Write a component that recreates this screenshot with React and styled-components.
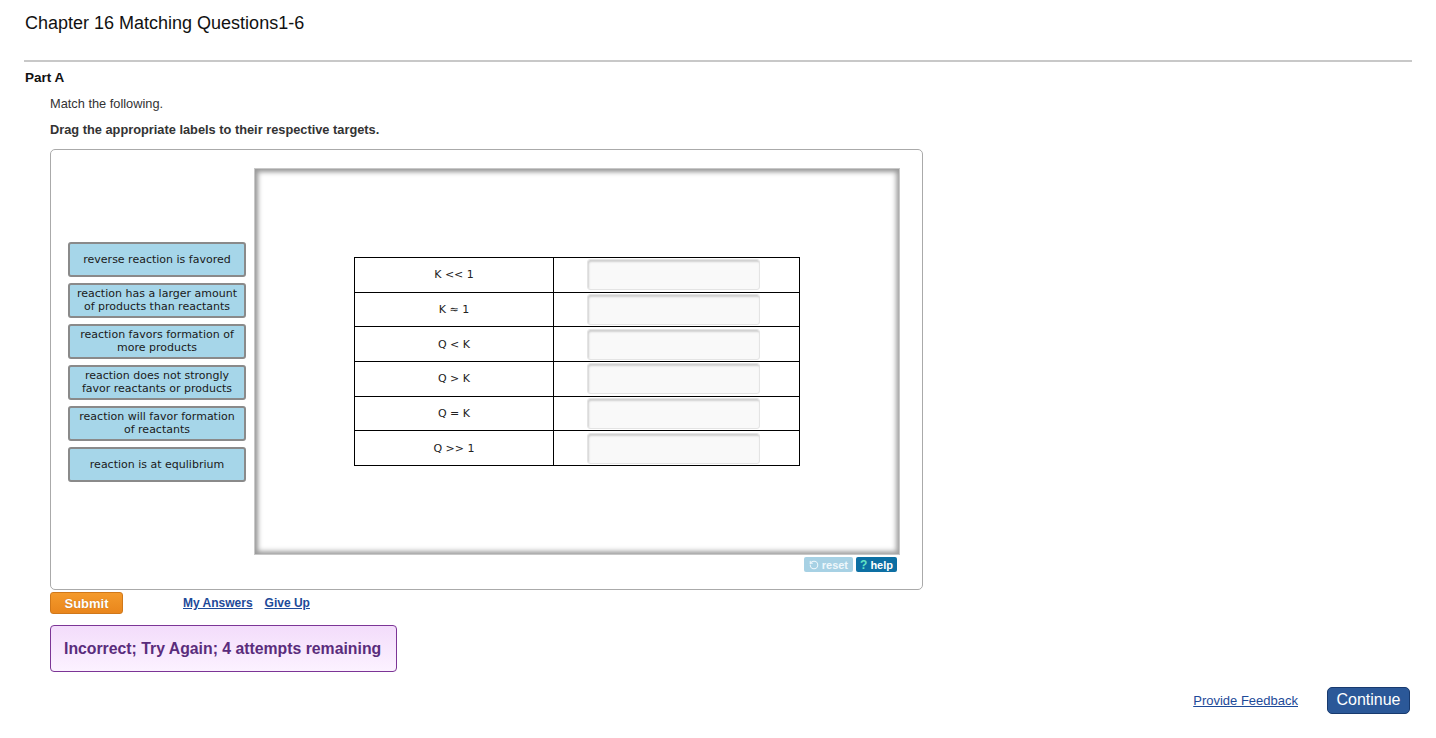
import React from "react";
import styled, { createGlobalStyle } from "styled-components";
import { RotateCcw } from "lucide-react";

const GlobalStyle = createGlobalStyle`
  html, body {
    margin: 0;
    padding: 0;
    background: #fff;
  }
  body {
    font-family: "Liberation Sans", Arial, sans-serif;
    color: #222;
  }
`;

const labels = [
  "reverse reaction is favored",
  "reaction has a larger amount of products than reactants",
  "reaction favors formation of more products",
  "reaction does not strongly favor reactants or products",
  "reaction will favor formation of reactants",
  "reaction is at equlibrium",
];

const targets = ["K << 1", "K \u2248 1", "Q < K", "Q > K", "Q = K", "Q >> 1"];

const Page = styled.div`
  padding: 0 24px 0 24px;
  width: 1388px;
`;

const Title = styled.h1`
  margin: 0;
  padding: 12px 0 0 1px;
  font-size: 18px;
  line-height: 22px;
  font-weight: normal;
  color: #111;
`;

const Rule = styled.hr`
  margin: 26px 0 0 0;
  border: 0;
  height: 2px;
  background: #c8c8c8;
`;

const PartTitle = styled.h2`
  margin: 8px 0 0 1px;
  font-size: 13.5px;
  line-height: 16px;
  font-weight: bold;
  color: #111;
`;

const Content = styled.div`
  padding-left: 26px;
`;

const Prompt = styled.p`
  margin: ${({ $top }) => $top}px 0 0 0;
  font-size: 12.8px;
  line-height: 16px;
  color: #333;
  font-weight: ${({ $bold }) => ($bold ? "bold" : "normal")};
`;

const Board = styled.div`
  margin-top: 11px;
  border: 1px solid #aaa;
  border-radius: 5px;
  display: flex;
  align-items: flex-start;
  padding: 18px 0 0 17px;
  box-sizing: content-box;
  width: 854px;
  height: 421px;
`;

const LabelColumn = styled.div`
  width: 178px;
  height: 387px;
  display: flex;
  flex-direction: column;
  justify-content: center;
  gap: 6px;
  margin-right: 8px;
`;

const Label = styled.div`
  box-sizing: border-box;
  width: 178px;
  height: 35px;
  background: #a6d6e9;
  border: 2px solid #8a8a8a;
  border-radius: 3px;
  display: flex;
  align-items: center;
  justify-content: center;
  text-align: center;
  padding: 0 4px;
  font-family: "DejaVu Sans", Verdana, sans-serif;
  font-size: 11px;
  line-height: 13px;
  color: #1a1a1a;
`;

const CanvasColumn = styled.div`
  display: flex;
  flex-direction: column;
`;

const Canvas = styled.div`
  box-sizing: border-box;
  width: 646px;
  height: 387px;
  background: #fff;
  border: 1px solid #c8c8c8;
  box-shadow: inset 2px 2px 5px 1px #999, inset -2px -2px 5px 1px #aaa;
  display: flex;
  align-items: center;
  justify-content: center;
`;

const MatchTable = styled.table`
  border-collapse: collapse;
  width: 446px;
  font-family: "DejaVu Sans", Verdana, sans-serif;
  font-size: 11px;
  color: #222;
`;

const Row = styled.tr`
  height: 34.7px;
`;

const KeyCell = styled.td`
  border: 1px solid #000;
  width: 198px;
  text-align: center;
  padding: 0;
`;

const DropCell = styled.td`
  border: 1px solid #000;
  padding: 0 0 0 33px;
`;

const DropSlot = styled.div`
  box-sizing: border-box;
  width: 173px;
  height: 31px;
  background: #f9f9f9;
  border: 1px solid #e4e4e4;
  border-radius: 3px;
  box-shadow: inset 1px 2px 2px #d0d0d0;
`;

const Toolbar = styled.div`
  display: flex;
  justify-content: flex-end;
  gap: 3px;
  margin-top: 2px;
  padding-right: 3px;
`;

const ToolButton = styled.button`
  display: flex;
  align-items: center;
  gap: 3px;
  height: 15px;
  padding: 0 ${({ $active }) => ($active ? 4 : 5)}px;
  border: 0;
  border-radius: 2px;
  background: ${({ $active }) => ($active ? "#0d6fa3" : "#a7d1e4")};
  color: ${({ $active }) => ($active ? "#fff" : "#eef7fb")};
  font-family: "Liberation Sans", Arial, sans-serif;
  font-size: 11px;
  font-weight: bold;
  cursor: pointer;
`;

const HelpMark = styled.span`
  color: #62e2c4;
  font-size: 12px;
`;

const Actions = styled.div`
  display: flex;
  align-items: center;
  margin-top: 2px;
`;

const SubmitButton = styled.button`
  box-sizing: border-box;
  width: 73px;
  height: 22px;
  border: 1px solid #d0781a;
  border-radius: 3px;
  background: linear-gradient(#f49a2c, #e9861c);
  color: #fff;
  font-family: "Liberation Sans", Arial, sans-serif;
  font-size: 13px;
  font-weight: bold;
  text-shadow: 0 0 1px #b8640e;
  padding: 0;
`;

const LinkGroup = styled.div`
  display: flex;
  gap: 12px;
  margin-left: 60px;
`;

const ActionLink = styled.a`
  color: #1d4a99;
  font-size: 12px;
  font-weight: ${({ $bold }) => ($bold ? "bold" : "normal")};
  text-decoration: underline;
`;

const Feedback = styled.div`
  box-sizing: border-box;
  margin-top: 11px;
  width: 347px;
  height: 47px;
  border: 1px solid #7c3596;
  border-radius: 4px;
  background: linear-gradient(#f3dcfb, #fcf2ff);
  display: flex;
  align-items: center;
  padding-left: 13px;
  color: #5a2c7c;
  font-size: 15.8px;
  font-weight: bold;
`;

const Footer = styled.div`
  display: flex;
  justify-content: flex-end;
  align-items: center;
  gap: 29px;
  margin-top: 15px;
  padding-right: 2px;
`;

const FeedbackLink = styled.a`
  color: #1d4a99;
  font-size: 13px;
  text-decoration: underline;
`;

const ContinueButton = styled.button`
  box-sizing: border-box;
  width: 83px;
  height: 27px;
  background: #2b5898;
  border: 1px solid #183a6e;
  border-radius: 5px;
  color: #fff;
  font-family: "Liberation Sans", Arial, sans-serif;
  font-size: 16px;
  padding: 0 0 2px 0;
`;

export default function App() {
  return (
    <>
      <GlobalStyle />
      <Page>
        <Title>Chapter 16 Matching Questions1-6</Title>
        <Rule />
        <PartTitle>Part A</PartTitle>
        <Content>
          <Prompt $top={10}>Match the following.</Prompt>
          <Prompt $top={10} $bold>
            Drag the appropriate labels to their respective targets.
          </Prompt>
          <Board>
            <LabelColumn>
              {labels.map((text) => (
                <Label key={text}>{text}</Label>
              ))}
            </LabelColumn>
            <CanvasColumn>
              <Canvas>
                <MatchTable>
                  <tbody>
                    {targets.map((t) => (
                      <Row key={t}>
                        <KeyCell>{t}</KeyCell>
                        <DropCell>
                          <DropSlot />
                        </DropCell>
                      </Row>
                    ))}
                  </tbody>
                </MatchTable>
              </Canvas>
              <Toolbar>
                <ToolButton>
                  <RotateCcw size={10} strokeWidth={2.5} />
                  reset
                </ToolButton>
                <ToolButton $active>
                  <HelpMark>?</HelpMark>
                  help
                </ToolButton>
              </Toolbar>
            </CanvasColumn>
          </Board>
          <Actions>
            <SubmitButton>Submit</SubmitButton>
            <LinkGroup>
              <ActionLink href="#" $bold>My Answers</ActionLink>
              <ActionLink href="#" $bold>Give Up</ActionLink>
            </LinkGroup>
          </Actions>
          <Feedback>Incorrect; Try Again; 4 attempts remaining</Feedback>
        </Content>
        <Footer>
          <FeedbackLink href="#">Provide Feedback</FeedbackLink>
          <ContinueButton>Continue</ContinueButton>
        </Footer>
      </Page>
    </>
  );
}
